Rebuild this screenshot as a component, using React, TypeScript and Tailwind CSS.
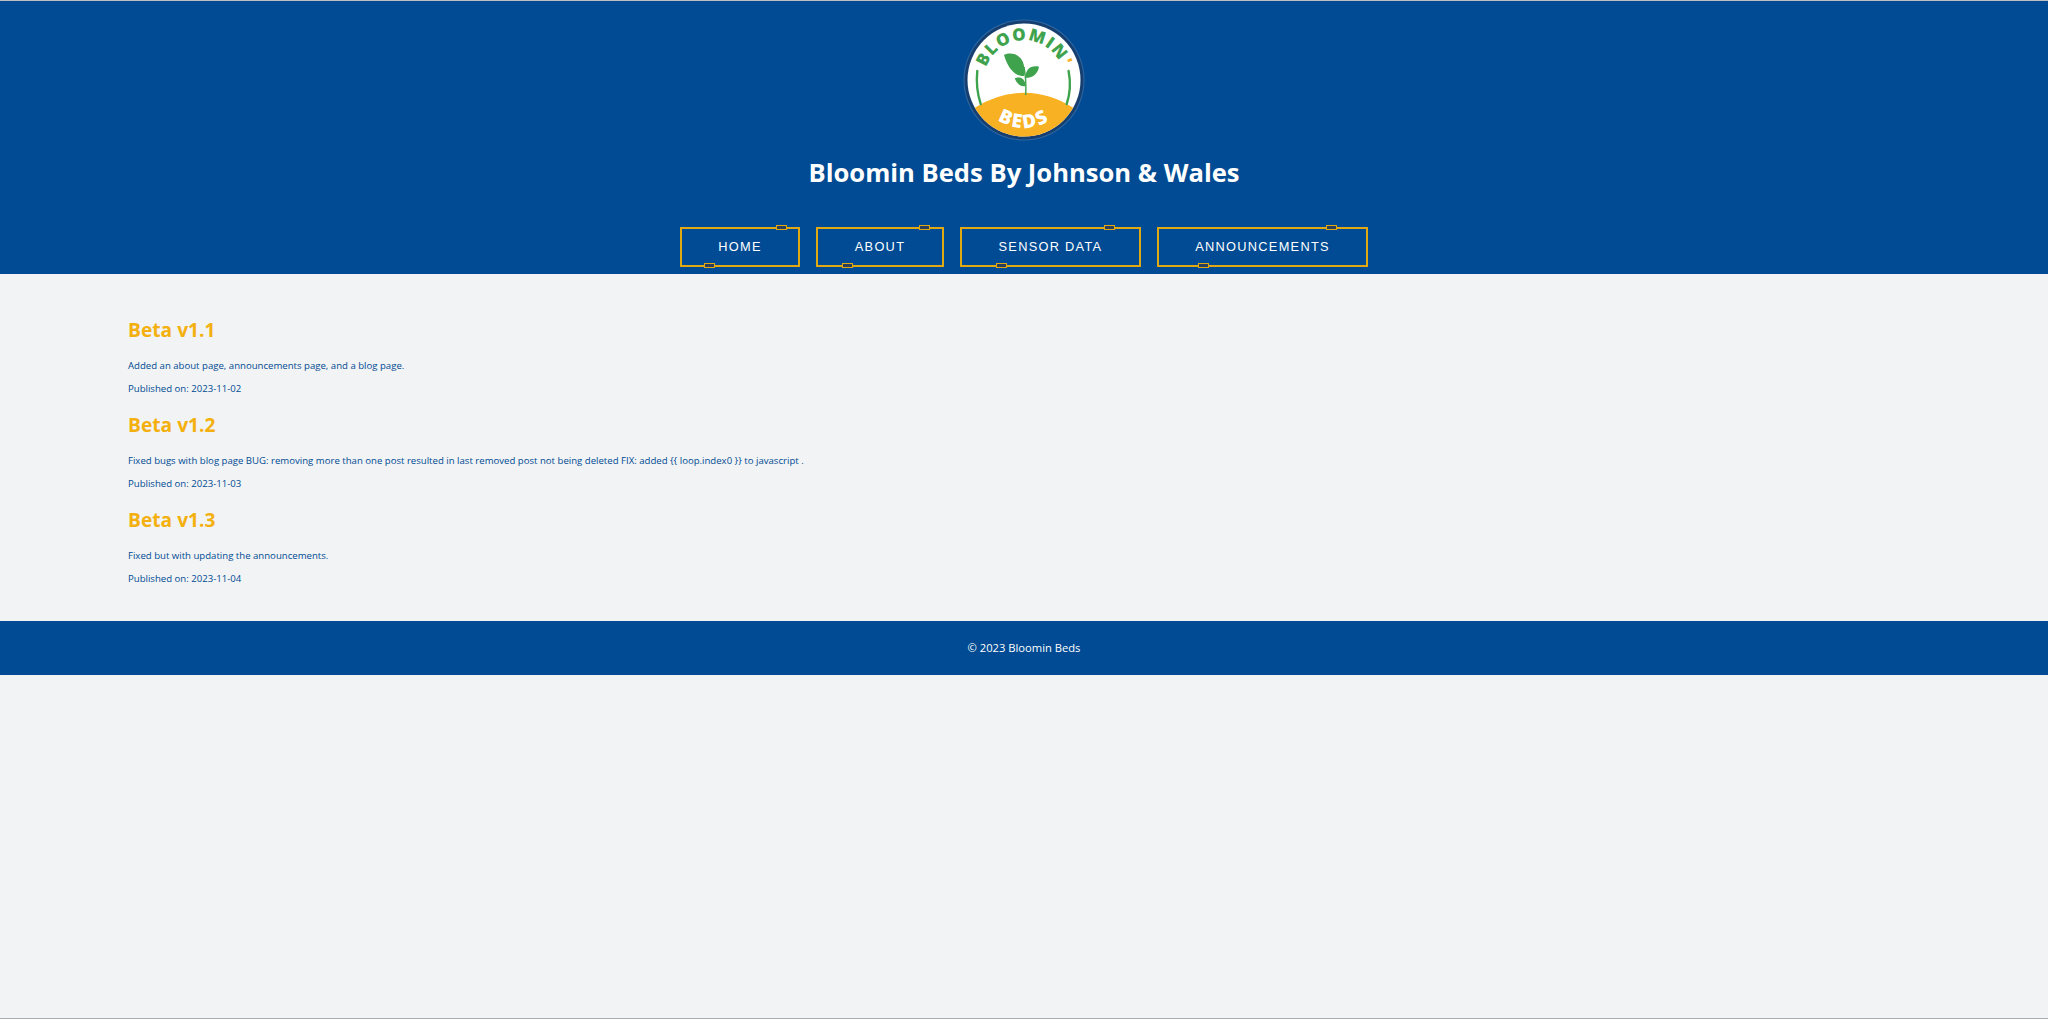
const posts = [
  {
    title: 'Beta v1.1',
    body: 'Added an about page, announcements page, and a blog page.',
    date: '2023-11-02',
  },
  {
    title: 'Beta v1.2',
    body: 'Fixed bugs with blog page BUG: removing more than one post resulted in last removed post not being deleted FIX: added {{ loop.index0 }} to javascript .',
    date: '2023-11-03',
  },
  {
    title: 'Beta v1.3',
    body: 'Fixed but with updating the announcements.',
    date: '2023-11-04',
  },
];

const navItems = [
  { label: 'HOME', width: 'w-[120px]', top: 'right-[11px]', bottom: 'left-[22px]' },
  { label: 'ABOUT', width: 'w-[128px]', top: 'right-[12px]', bottom: 'left-[24px]' },
  { label: 'SENSOR DATA', width: 'w-[181px]', top: 'right-[24px]', bottom: 'left-[34px]' },
  { label: 'ANNOUNCEMENTS', width: 'w-[211px]', top: 'right-[29px]', bottom: 'left-[39px]' },
];

function Logo() {
  return (
    <svg width="124" height="124" viewBox="0 0 124 124" className="block">
      <defs>
        <clipPath id="logo-clip">
          <circle cx="62" cy="62" r="56.5" />
        </clipPath>
        <path id="logo-top" d="M 22.5 56 A 40 40 0 0 1 101.5 56" />
        <path id="logo-bottom" d="M 24 94 Q 62 126 100 94" />
      </defs>
      <circle cx="62" cy="62" r="60.5" fill="#2d68a3" />
      <circle cx="62" cy="62" r="59.5" fill="#163f70" />
      <circle cx="62" cy="62" r="56.5" fill="#ffffff" />
      <path
        d="M 0 98 L 13.7 89.3 Q 36 75 62 74.7 Q 88 75 110.3 89.3 L 124 98 L 124 124 L 0 124 Z"
        fill="#f8b122"
        clipPath="url(#logo-clip)"
      />
      <text fontFamily="'Open Sans', sans-serif" fontWeight="800" fontSize="17" fill="#3fa34d" letterSpacing="1.2">
        <textPath href="#logo-top" startOffset="50%" textAnchor="middle">
          BLOOMIN<tspan fill="#f8b122">'</tspan>
        </textPath>
      </text>
      <text fontFamily="'Open Sans', sans-serif" fontWeight="800" fontSize="19" fill="#ffffff" letterSpacing="2">
        <textPath href="#logo-bottom" startOffset="50%" textAnchor="middle">BEDS</textPath>
      </text>
      <path d="M 15.3 53 Q 13.5 70 18.7 86" fill="none" stroke="#3fa34d" strokeWidth="2.4" strokeLinecap="round" />
      <path d="M 106.6 53 Q 110 70 104.7 86" fill="none" stroke="#3fa34d" strokeWidth="2.4" strokeLinecap="round" />
      <path d="M 63.7 77 Q 64.5 62 62 49" fill="none" stroke="#3fa34d" strokeWidth="1.4" />
      <path d="M 42 37 C 50 33 62 37 62.5 52 C 63 55 63 56 62 58 C 52 58 46 50 42 37 Z" fill="#3fa34d" />
      <path d="M 63.7 60 C 63 50 70 47 77 48.7 C 76 56 70 60 63.7 60 Z" fill="#3fa34d" />
      <path d="M 52.7 60.3 C 58 58 63 60 63.7 68 C 59 69 55 66 52.7 60.3 Z" fill="#3fa34d" />
    </svg>
  );
}

export default function App() {
  return (
    <div className="flex min-h-[1019px] flex-col border-t border-b border-t-[#bdbfc2] border-b-[#a9abae] bg-[#f2f3f5] font-['Open_Sans',sans-serif]">
      <header className="flex h-[273px] flex-col items-center bg-[#004b93] pt-[17px]">
        <Logo />
        <h1 className="mt-[13px] text-[25.6px] leading-[36px] font-bold text-white">
          Bloomin Beds By Johnson &amp; Wales
        </h1>
        <nav className="mt-[36px] flex gap-4">
          {navItems.map((item) => (
            <a
              key={item.label}
              className={`relative flex h-10 items-center justify-center border-2 border-[#e0a911] font-['Liberation_Sans',sans-serif] text-[12.8px] tracking-[1.28px] text-white ${item.width}`}
            >
              {item.label}
              <span className={`absolute -top-[4px] h-[5px] w-[11px] border border-[#e0a911] bg-[#2b3f5c] ${item.top}`} />
              <span className={`absolute -bottom-[3px] h-[5px] w-[11px] border border-[#e0a911] bg-[#2b3f5c] ${item.bottom}`} />
            </a>
          ))}
        </nav>
      </header>

      <main className="flex h-[347px] flex-col px-[128px] pt-[42px]">
        {posts.map((post) => (
          <article key={post.title} className="h-[95px]">
            <h2 className="text-[19.2px] leading-[27px] font-bold text-[#f3b00f]">{post.title}</h2>
            <p className="mt-[15px] text-[9.6px] leading-[15px] text-[#004b93]">{post.body}</p>
            <p className="mt-2 text-[9.6px] leading-[15px] text-[#004b93]">Published on: {post.date}</p>
          </article>
        ))}
      </main>

      <footer className="flex h-[54px] items-center justify-center bg-[#004b93] text-[11.2px] text-white">
        © 2023 Bloomin Beds
      </footer>
      <div className="flex-1" />
    </div>
  );
}
